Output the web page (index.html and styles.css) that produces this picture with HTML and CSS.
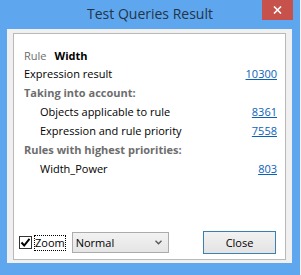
FILE: index.html
```html
<!DOCTYPE html>
<html lang="en">
<head>
  <meta charset="UTF-8">
  <title>Test Queries Result</title>
  <link rel="stylesheet" href="styles.css">
</head>
<body>

  <div class="window">
    <div class="titlebar">
      <span></span>
      <div class="title">Test Queries Result</div>
      <div class="close-btn">
        <svg width="9" height="8" viewBox="0 0 9 8">
          <path d="M1 0.5 L8 7.5 M8 0.5 L1 7.5" stroke="#fff" stroke-width="1.6" fill="none"/>
        </svg>
      </div>
    </div>

    <div class="client">
      <div class="panel">
        <div class="rows">
          <div class="row first">
            <span class="muted">Rule</span>
            <strong class="rule-name">Width</strong>
          </div>
          <div class="row">
            <span>Expression result</span>
            <a href="#" class="value">10300</a>
          </div>
          <div class="row">
            <span class="section">Taking into account:</span>
          </div>
          <div class="row indent">
            <span>Objects applicable to rule</span>
            <a href="#" class="value">8361</a>
          </div>
          <div class="row indent">
            <span>Expression and rule priority</span>
            <a href="#" class="value">7558</a>
          </div>
          <div class="row">
            <span class="section">Rules with highest priorities:</span>
          </div>
          <div class="row indent">
            <span>Width_Power</span>
            <a href="#" class="value">803</a>
          </div>
        </div>

        <div class="footer">
          <span class="checkbox">
            <svg width="11" height="11" viewBox="0 0 11 11">
              <path d="M1.5 5.5 L4.2 8.5 L9.5 1.8" stroke="#000" stroke-width="2" fill="none"/>
            </svg>
          </span>
          <span class="check-label">Zoom</span>
          <div class="dropdown">
            <span>Normal</span>
            <svg width="7" height="5" viewBox="0 0 7 5">
              <path d="M0.5 0.8 L3.5 3.8 L6.5 0.8" stroke="#555" stroke-width="1.3" fill="none"/>
            </svg>
          </div>
          <button class="close-button">Close</button>
        </div>
      </div>
    </div>
  </div>

</body>
</html>
```

FILE: styles.css
```css
body {
  margin: 0;
  background: #f3f3f3;
  font-family: "Open Sans", "Noto Sans", sans-serif;
  font-size: 11px;
  color: #000;
}

.window {
  width: 300px;
  height: 275px;
  background: #5ea7ef;
  display: flex;
  flex-direction: column;
}

.titlebar {
  height: 29px;
  display: grid;
  grid-template-columns: 1fr auto 1fr;
  align-items: start;
}

.title {
  font-size: 14px;
  line-height: 20px;
  margin-top: 4px;
  color: #243447;
}

.close-btn {
  justify-self: end;
  width: 31px;
  height: 20px;
  margin-right: 7px;
  background: #c7514b;
  display: flex;
  align-items: center;
  justify-content: center;
}

.client {
  height: 234px;
  margin: 0 8px 0 7px;
  background: #f0f0f0;
  padding: 4px 6px 3px 6px;
  box-sizing: border-box;
  display: flex;
}

.panel {
  flex: 1;
  background: #fff;
  border: 1px solid #b9b9b9;
  display: flex;
  flex-direction: column;
}

.rows {
  padding: 13px 8px 0 10px;
}

.row {
  display: flex;
  justify-content: space-between;
  line-height: 19px;
  height: 19px;
}

.row.first {
  height: 17px;
  line-height: 17px;
  justify-content: flex-start;
}

.row.indent {
  padding-left: 16px;
}

.muted {
  color: #6d6d6d;
}

.rule-name {
  margin-left: 8px;
  font-weight: bold;
}

.section {
  color: #6d6d6d;
  font-weight: bold;
}

.value {
  color: #0a62b8;
  text-decoration: underline;
}

.footer {
  margin-top: auto;
  padding: 0 9px 5px 5px;
  display: flex;
  align-items: center;
}

.checkbox {
  width: 11px;
  height: 11px;
  border: 1px solid #333;
  background: #fff;
  display: flex;
  align-items: center;
  justify-content: center;
}

.check-label {
  margin-left: 2px;
  height: 14px;
  line-height: 14px;
  border: 1px dotted #000;
}

.dropdown {
  margin-left: 6px;
  width: 97px;
  height: 21px;
  box-sizing: border-box;
  border: 1px solid #acacac;
  background: linear-gradient(#f2f2f2, #e5e5e5);
  display: flex;
  align-items: center;
  justify-content: space-between;
  padding: 0 6px 0 3px;
}

.close-button {
  margin-left: auto;
  width: 73px;
  height: 23px;
  border: 1px solid #3c7fb1;
  background: linear-gradient(#f2f2f2, #e3e3e3);
  font-family: inherit;
  font-size: 11px;
  color: #000;
  padding: 0;
}
```
